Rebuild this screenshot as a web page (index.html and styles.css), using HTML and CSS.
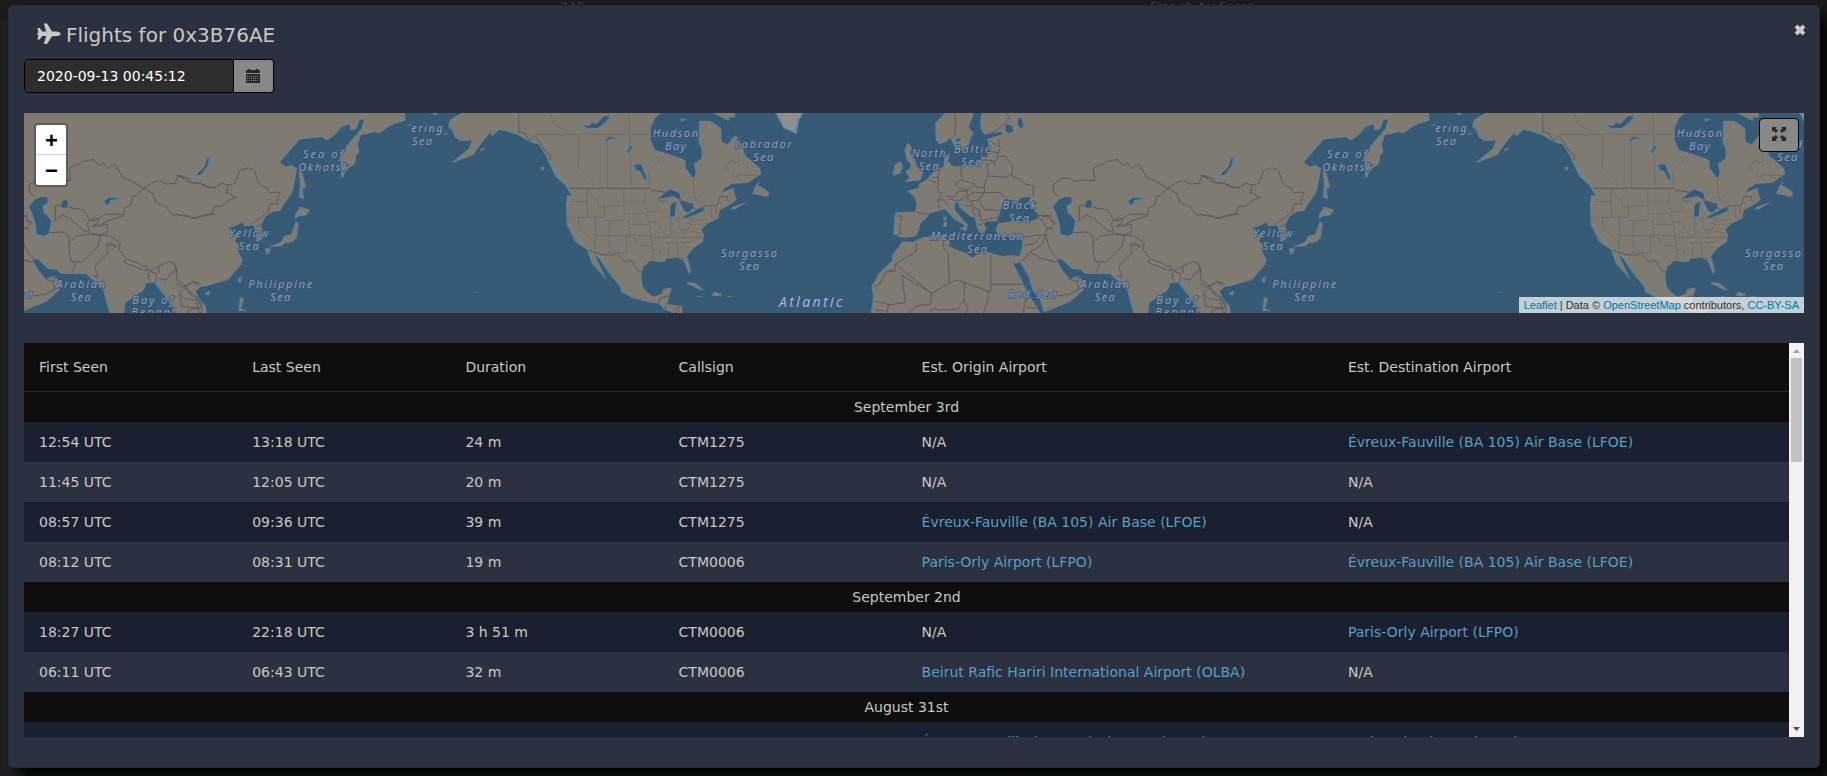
FILE: index.html
```html
<!DOCTYPE html>
<html lang="en">
<head>
<meta charset="utf-8">
<title>Flights for 0x3B76AE</title>
<link rel="stylesheet" href="styles.css">
</head>
<body>
<div class="backdrop"><span class="backdrop-count">240</span><span class="backdrop-operator">French Air Force</span></div>
<main class="dialog">
  <header class="dialog-header">
    <svg class="plane" viewBox="0 0 24 22"><path d="M0.4 5H2.6L5.4 8.6H9.2L6.8 0.6H10L15 8.4L19.6 8.5Q23.6 9.2 23.8 10.8Q23.6 12.4 19.6 13.1L15 13.2L10 21H6.8L9.2 13H5.4L2.6 16.6H0.4L1.3 12L0.2 11.4V10.2L1.3 9.6Z"/></svg>
    <h1 class="title">Flights for 0x3B76AE</h1>
    <svg class="close" viewBox="0 0 12 12"><path d="M2 2L10 10M10 2L2 10"/></svg>
  </header>
  <div class="date-group">
    <div class="date-input">2020-09-13 00:45:12</div>
    <div class="date-button">
      <svg class="calendar" viewBox="0 0 14 14"><path d="M0 1H2V0H4V1H10V0H12V1H14V4H0Z"/><path d="M0 5H14V14H0Z"/><path class="calendar-grid" d="M1 7.5H13M1 9.5H13M1 11.5H13" stroke-dasharray="1 1"/></svg>
    </div>
  </div>
  <section class="map">
    <svg class="tiles" viewBox="0 0 1780 200">
      <defs>
        <g id="eurasia">
          <g transform="translate(816 -13) scale(.33333)">
            <path d="M318 39L290 68L292 118L300 131L318 126L335 112L340 122L350 142L365 150L385 138L392 118L400 98L386 82L398 52L400 39Z"/>
            <path d="M430 39L424 60L428 92L440 103L486 94L492 102L446 116L450 135L452 158L430 165L428 178L400 196L370 196L350 200L335 196L324 182L330 160L318 170L315 200L290 208L276 225L262 240L242 250L240 262L206 272L228 290L234 310L230 335L172 336L168 350L164 402L186 410L198 412L228 408L238 390L240 372L262 352L268 340L300 332L318 326L330 338L345 355L376 374L380 388L384 372L372 362L345 330L344 310L358 306L364 322L395 348L410 352L412 372L422 396L432 400L440 385L432 372L440 366L470 364L476 350L482 330L488 310L498 295L520 300L530 310L545 292L578 290L568 306L585 330L602 345L595 356L570 366L530 362L478 370L470 388L480 405L520 410L550 420L552 435L542 468L515 466L486 468L440 455L416 460L402 474L374 458L340 445L328 440L330 425L312 405L250 412L222 426L190 424L180 440L162 462L160 482L120 520L98 560L104 590L97 639L602 639L565 580L540 530L515 480L530 490L545 486L570 530L582 570L605 600L615 636L690 605L730 572L732 545L715 528L690 538L668 510L650 480L668 476L700 505L725 508L740 520L815 522L866 570L885 639L925 639L928 608L985 570L990 550L1020 546L1030 562L1060 600L1085 639L1125 639L1130 600L1130 39Z"/>
            <path d="M206 128L198 150L205 180L216 190L214 205L200 212L212 232L198 245L242 240L250 215L232 200L220 168L210 160L216 145ZM182 184L168 195L162 226L182 220L188 200ZM316 344L320 354L318 362L314 358ZM316 364L322 366L320 380L314 380ZM362 384L382 380L380 392Z"/>
          </g>
          <g transform="translate(1176 -13) scale(.33333)">
            <path d="M92 639L90 620L65 590L60 572L75 560L100 556L155 540L195 495L200 480L187 455L190 435L178 425L185 405L165 400L160 385L205 365L208 378L236 375L245 400L245 425L262 415L265 400L255 380L268 350L290 335L312 332L350 275L356 245L364 205L345 195L330 200L312 187L372 118L440 110L455 120L476 106L498 80L525 72L528 90L540 88L552 58L568 58L560 85L515 138L500 165L498 190L500 235L512 210L538 190L540 168L550 155L545 132L555 105L602 95L612 100L640 78L690 60L685 39L0 39L0 555L45 639Z"/>
            <path d="M372 205L380 220L390 262L380 265L384 297L374 290L376 250ZM376 320L402 330L392 345L372 348L360 354L362 342ZM364 362L368 375L362 415L350 425L325 430L318 438L280 440L320 425L328 408L350 402ZM270 444L286 446L276 464ZM198 526L194 548L188 543ZM196 590L203 598L196 625L214 632L192 632ZM90 578L104 572L98 586Z"/>
          </g>
        </g>
        <g id="america" transform="translate(396 -13) scale(.33333)">
          <path d="M128 39L95 58L88 78L100 88L108 110L125 122L160 120L150 145L98 188L160 165L188 125L210 100L215 82L218 108L240 88L262 92L298 104L340 128L360 132L384 170L392 190L412 230L440 255L460 290L446 285L442 310L445 375L470 425L505 448L520 490L548 520L563 542L520 456L545 480L568 515L605 560L608 575L640 592L690 606L722 610L738 628L765 639L788 639L786 618L758 614L742 612L755 562L735 566L728 580L705 590L690 585L668 560L664 525L670 502L692 482L735 485L740 475L775 472L795 480L810 520L814 515L802 470L820 445L850 425L852 405L845 388L862 372L895 355L900 330L925 318L950 300L940 265L910 275L890 295L915 265L940 250L985 248L1023 222L1020 205L975 165L968 140L948 106L925 135L905 125L904 85L870 62L842 62L840 125L850 150L848 175L826 190L832 220L822 237L798 205L795 180L740 160L705 150L692 120L692 85L705 55L722 39Z"/>
          <path d="M185 148L195 142L190 152ZM365 200L374 200L370 212ZM1022 235L1015 255L1046 275L1046 290L1000 280ZM940 320L985 305L940 330ZM885 39L930 62L925 50L946 52L944 39ZM800 547L825 548L856 572L830 562ZM885 576L908 582L900 588L880 586ZM925 588L940 590L925 591ZM835 588L850 590L835 591ZM785 55L798 58L788 64ZM170 574L174 577L171 579ZM76 98L86 102L78 104ZM35 39L50 39L56 46Z"/>
        </g>
        <g id="world">
          <g class="shore"><use href="#eurasia" x="-1.5" y=".3"/><use href="#america" x="-1.5" y=".3"/></g>
          <g class="land"><use href="#eurasia"/><use href="#america"/></g>
          <g transform="translate(396 -13) scale(.33333)">
            <path class="shore" d="M1065 39L1090 85L1130 102L1138 60L1150 39Z"/>
            <path class="ice" d="M1072 39L1092 82L1124 96L1134 60L1146 39Z"/>
            <g class="shore"><path d="M490 76L510 78L516 68L530 72L555 48L574 50L560 66L536 86L504 88L490 82ZM552 124L566 112L596 114L570 120L554 128ZM630 138L638 136L636 150L622 166L620 154ZM642 194L666 192L684 240L678 246L664 216L644 208ZM714 298L735 280L750 268L782 280L786 300L760 290L745 294L720 298ZM755 312L772 304L768 350L752 356ZM778 302L822 310L824 325L806 340L790 332ZM788 352L824 334L858 322L852 336L800 358ZM534 352L550 362L540 364Z"/></g>
            <g class="water"><path d="M490 76L510 78L516 68L528 73L553 48L570 50L558 64L534 83L504 85ZM552 124L566 112L590 114L568 118ZM630 138L636 138L632 150L620 160ZM644 196L662 192L680 238L674 240L662 214L646 208ZM714 296L735 280L750 268L778 280L782 298L760 288L745 292ZM752 316L768 304L764 348L750 352ZM778 302L820 312L818 325L804 338L792 330ZM788 352L824 332L854 322L848 334L800 354Z"/></g>
            <path class="border" d="M296 39V97L312 98L330 122L342 106L360 128L380 160L392 168L390 182M450 265H688L694 270L742 278L800 308L830 330L860 317H890L902 290L920 288L926 308M505 450L550 465H580L590 460L615 486L632 480L655 514L668 517M716 612L720 595L735 590L748 588M742 610L735 628M755 632L780 620M765 639L782 628"/>
            <path class="state" d="M346 103H690M475 103V200L520 245L522 265M562 103V265M628 39V103L634 265M390 39L398 65L420 85L436 88L444 103M688 265V213L738 160M820 237L824 295L860 312M1020 226H956L945 232L925 218L922 190L932 180L940 190L958 185L956 165M508 265L512 285L530 300L535 320H553M448 305H490L502 300V265M502 300V352M442 352H553V317H612M475 352V385L526 430M526 352V450M526 406H692L690 385L682 350L676 300L672 265M568 362V458M553 362H628V406M612 265V340H672L684 352M612 303H676M628 373H690M620 406V458H568M645 412V432L696 440M620 412H645M682 334H722M684 367H722M695 412H850M692 406L698 450L720 448L718 470M698 448V475M735 428H810L842 412M748 428L745 472M770 428L776 472M776 472L804 474M790 428L820 458M722 300L708 320L722 340L730 360L720 380L738 410M752 355V395M776 355V385L738 408M776 355H800M776 385L800 392L812 374L862 372M812 360H858M812 374V350M800 392L785 408M812 395L842 398M875 317L874 355M892 317L885 355M738 304L712 300"/>
          </g>
          <g transform="translate(816 -13) scale(.33333)">
            <g class="shore"><path d="M640 320L655 300L675 292L698 292L698 312L686 318L684 338L700 350L712 364L706 382L704 402L684 411L660 404L658 375L648 342ZM738 305L752 298L760 306L758 326L736 322ZM866 302L880 292L920 294L918 300L886 303L882 314L870 316ZM1126 227L1142 226L1168 198L1174 172L1185 172L1182 196L1158 226L1130 234ZM496 72L520 78L526 92L510 104L498 96ZM535 54L548 54L556 84L540 86L534 74ZM346 120L360 112L366 118L350 128Z"/></g>
            <g class="water"><path d="M640 320L655 300L675 292L694 292L694 310L680 316L682 338L696 350L706 364L702 380L698 400L684 408L662 402L660 375L650 342ZM738 305L750 300L756 306L752 324L736 322ZM866 302L880 294L912 295L884 300L878 312L870 314ZM1128 227L1140 226L1166 200L1174 174L1180 176L1174 198L1154 224ZM496 72L516 78L520 92L510 100L498 94ZM535 54L546 56L550 80L540 84L534 72ZM346 120L360 114L364 118L350 126ZM478 352L500 358L496 366L474 366ZM436 365L474 364L466 398L452 396L438 380ZM428 148L444 142L442 170L428 172Z"/></g>
            <path class="border" d="M344 39L348 72L342 110M500 39L508 55L470 92L444 102M475 115L480 145L470 180L440 195L444 225L432 260L434 278M448 122L475 138M450 152L476 160M430 180L462 182L466 200M478 170L498 168L518 200L515 228L540 238L555 252L580 258V290M444 228L500 232L515 220M300 205L294 230L296 252L290 262L306 285L294 300M266 240L290 250M276 232L294 232M362 196L366 238L345 252L362 268L382 270L398 258L435 264M366 240L404 252M320 288L345 292L352 276L382 272L380 290L352 304L330 296M382 290L402 276L432 280L416 300L392 304L380 292M434 278L480 278L498 294M418 300L432 328L478 332M420 340L424 362L476 352M392 304L402 320L398 335L410 350M402 322L418 330V352M372 316L398 318M294 300H312L326 320M294 300L298 325M230 336L264 345M172 348H186L180 370L182 402L170 404M430 370L414 376M548 412L590 405H616L608 432L572 456L545 485M552 436L580 432L600 412M616 405L622 386L610 368L592 345L630 352L642 372L628 388L618 382M610 345L636 348M630 360L652 370M622 386L640 386M618 405L625 435L640 462L655 480M572 458L605 476L640 484L650 488M545 485L568 460M452 466V553H550M452 553V572L444 578V600L430 639M452 576L350 540L328 550L275 580L166 492L230 454L228 428M166 492L165 514L136 516L120 552L100 560M136 516L166 508M186 526L275 580L272 612L230 618L205 639M186 526L196 608L146 615L136 610L104 604M310 420L312 448L325 462L328 550M325 440L332 430M374 546L372 600L352 628L300 630L282 626L268 635M372 600L384 630L376 639M146 615L140 639M106 630L134 632M550 639L556 600L570 590M560 622L590 625M590 605L600 622M640 590L690 582L716 570L712 548L716 530M690 538L712 545M656 292L640 275V255L665 235L690 235L706 245L724 240L764 242L760 205L800 185L832 178L846 196L862 188L874 206L895 192L920 232L940 240L983 264L960 290L952 285L944 316L926 324L924 344L870 342L838 362L820 360L804 330L770 324L740 312L718 318V358M983 264L1010 248L1030 241L1050 252L1078 250L1086 226L1120 236L1126 248L1158 252L1180 262L1200 264M983 264L1010 280L1018 305L1050 320L1068 344L1110 346L1134 355L1165 344L1200 342M712 364L740 345L765 358L800 390L822 398L812 370L840 352L850 365L835 375L852 378L868 365L924 346M822 380L875 372L872 400L850 404L828 400M704 398L740 396L760 410L758 440L764 480L778 492L768 520M758 430L785 408L822 402L852 408L846 440L820 465L800 485L764 484M852 406L880 408L912 428L910 450L930 475L990 500L1000 512L1030 498L1060 484L1076 490L1085 520M872 434L884 428L902 440L872 434L875 460L836 500L846 532L832 528M930 475L925 488L990 512L994 500M995 510L1000 545M1002 515L1022 520L1020 545M1030 498L1028 520M1085 500L1050 540L1030 535M1076 492L1084 540L1110 560L1090 580L1104 595L1140 600L1150 639M1110 560L1130 545L1150 555M1108 560L1125 585L1150 600L1160 625M1090 585L1098 620L1150 624"/>
          </g>
          <g transform="translate(1176 -13) scale(.33333)">
            <path class="border" d="M0 225L28 238L40 248L70 248L90 262L120 262L138 250L158 255L150 278L182 292L160 300L138 318L115 320L108 342L55 355L0 342M158 255L178 250L190 212L215 204L235 210L250 255L275 264L280 278L310 276L302 312L280 314L278 335L250 355L222 374M240 380L260 370M0 550L20 562L50 545L75 550M28 565L60 590L76 620V639M36 639L38 628L72 625"/>
          </g>
          <g class="sea" transform="translate(396 -13) scale(.33333)">
            <text x="18" y="96" textLength="108">'ering</text><text x="8" y="135">Sea</text>
            <text x="768" y="112" textLength="140">Hudson</text><text x="768" y="151">Bay</text>
            <text x="1032" y="145" textLength="175">Labrador</text><text x="1032" y="183">Sea</text>
            <text x="989" y="471" textLength="172">Sargasso</text><text x="989" y="509">Sea</text>
            <text class="ocean" x="1175" y="621" textLength="196">Atlantic</text>
          </g>
          <g class="sea" transform="translate(816 -13) scale(.33333)">
            <text x="268" y="171" textLength="106">North</text><text x="268" y="209">Sea</text>
            <text x="398" y="160" textLength="112">Baltic</text><text x="396" y="199">Sea</text>
            <text x="540" y="327" textLength="104">Black</text><text x="539" y="366">Sea</text>
            <text x="413" y="420" textLength="282">Mediterranean</text><text x="413" y="459">Sea</text>
            <text x="579" y="593" textLength="148">Red Sea</text>
            <text x="796" y="565" textLength="150">Arabian</text><text x="796" y="604">Sea</text>
            <text x="1012" y="611" textLength="126">Bay of</text><text x="1012" y="649" textLength="132">Bengal</text>
          </g>
          <g class="sea" transform="translate(1176 -13) scale(.33333)">
            <text x="443" y="175" textLength="124">Sea of</text><text x="443" y="214" textLength="152">Okhotsk</text>
            <text x="220" y="410" textLength="122">Yellow</text><text x="220" y="449">Sea</text>
            <text x="315" y="565" textLength="196">Philippine</text><text x="315" y="604">Sea</text>
          </g>
        </g>
      </defs>
      <rect class="water" width="1780" height="200"/>
      <use href="#world" x="-1024"/><use href="#world"/><use href="#world" x="1024"/>
    </svg>
    <div class="zoom"><span class="zoom-button">+</span><span class="zoom-button">−</span></div>
    <div class="fullscreen"><svg viewBox="0 0 14 14"><path d="M0 0H5L3.6 1.4L6 3.8L3.8 6L1.4 3.6L0 5ZM14 0V5L12.6 3.6L10.2 6L8 3.8L10.4 1.4L9 0ZM0 14V9L1.4 10.4L3.8 8L6 10.2L3.6 12.6L5 14ZM14 14H9L10.4 12.6L8 10.2L10.2 8L12.6 10.4L14 9Z"/></svg></div>
    <div class="attribution"><a>Leaflet</a> | Data © <a>OpenStreetMap</a> contributors, <a>CC-BY-SA</a></div>
  </section>
  <section class="flights">
    <div class="table">
      <div class="row head"><span>First Seen</span><span>Last Seen</span><span>Duration</span><span>Callsign</span><span>Est. Origin Airport</span><span>Est. Destination Airport</span></div>
      <div class="day">September 3rd</div>
      <div class="row dark"><span>12:54 UTC</span><span>13:18 UTC</span><span>24 m</span><span>CTM1275</span><span>N/A</span><a>Évreux-Fauville (BA 105) Air Base (LFOE)</a></div>
      <div class="row"><span>11:45 UTC</span><span>12:05 UTC</span><span>20 m</span><span>CTM1275</span><span>N/A</span><span>N/A</span></div>
      <div class="row dark"><span>08:57 UTC</span><span>09:36 UTC</span><span>39 m</span><span>CTM1275</span><a>Évreux-Fauville (BA 105) Air Base (LFOE)</a><span>N/A</span></div>
      <div class="row"><span>08:12 UTC</span><span>08:31 UTC</span><span>19 m</span><span>CTM0006</span><a>Paris-Orly Airport (LFPO)</a><a>Évreux-Fauville (BA 105) Air Base (LFOE)</a></div>
      <div class="day">September 2nd</div>
      <div class="row dark"><span>18:27 UTC</span><span>22:18 UTC</span><span>3 h 51 m</span><span>CTM0006</span><span>N/A</span><a>Paris-Orly Airport (LFPO)</a></div>
      <div class="row"><span>06:11 UTC</span><span>06:43 UTC</span><span>32 m</span><span>CTM0006</span><a>Beirut Rafic Hariri International Airport (OLBA)</a><span>N/A</span></div>
      <div class="day">August 31st</div>
      <div class="row dark"><span></span><span></span><span></span><span></span><a>Évreux-Fauville (BA 105) Air Base (LFOE)</a><a>Paris-Orly Airport (LFPO)</a></div>
    </div>
    <div class="scrollbar">
      <svg class="arrow arrow-up" viewBox="0 0 15 15"><path d="M4 10L7.5 6L11 10Z"/></svg>
      <div class="thumb"></div>
      <svg class="arrow" viewBox="0 0 15 15"><path d="M4 5L7.5 9L11 5Z"/></svg>
    </div>
  </section>
</main>
</body>
</html>
```
FILE: styles.css
```css
* { box-sizing: border-box; }
body { margin: 0; height: 776px; overflow: hidden; background: #1e2022; color: #c8c8c8; font: 14px/20px "DejaVu Sans", sans-serif; }
.backdrop { position: absolute; top: 0; left: 0; width: 1827px; height: 20px; overflow: hidden; display: grid; grid-template-columns: 590px 1fr; padding-left: 560px; font-size: 13px; line-height: 14px; color: #3c3c3e; background: #1b1c1e; }
.dialog { position: relative; display: flex; flex-direction: column; width: 1812px; height: 763px; margin: 5px 0 0 8px; padding: 0 15px; background: #2c3141; border: 1px solid #2b2b2e; border-radius: 5px; box-shadow: 10px 10px 15px #000; }
.dialog-header { display: flex; align-items: center; height: 53px; flex: none; padding: 5px 0 0 13px; }
.plane { width: 24px; height: 22px; fill: #c8c8c8; margin-top: -3px; }
.title { margin: 0 0 0 5px; font-size: 20px; font-weight: 400; line-height: 24px; }
.close { width: 12px; height: 12px; margin: -10px -2px 0 auto; stroke: #c8c8c8; stroke-width: 4; }
.date-group { display: flex; flex: none; width: 250px; height: 34px; border: 1px solid #000; border-radius: 4px; overflow: hidden; }
.date-input { width: 209px; padding: 6px 12px; color: #fff; background: #2d2d2d; border-right: 1px solid #000; }
.date-button { flex: 1; display: flex; align-items: center; justify-content: center; background: #888; }
.calendar { width: 14px; height: 14px; fill: #272727; margin-left: -1px; }
.calendar-grid { stroke: #888; stroke-width: 1; }
.map { position: relative; flex: none; height: 200px; margin-top: 20px; overflow: hidden; }
.tiles { display: block; width: 1780px; height: 200px; }
.water { fill: #375b76; }
.shore { fill: #5087ac; }
.land { fill: #7f7a72; }
.ice { fill: #8f8d8d; }
.border { fill: none; stroke: #5c5660; stroke-width: 2.8; stroke-linejoin: round; }
.state { fill: none; stroke: #6d6961; stroke-width: 2.1; }
.sea { fill: #8c9fc0; stroke: #37506f; stroke-width: 4; paint-order: stroke; font: italic 33px "Noto Sans", sans-serif; letter-spacing: 4px; text-anchor: middle; }
.ocean { font-size: 42px; fill: #9dbbe0; letter-spacing: 6px; }
.zoom { position: absolute; left: 10px; top: 10px; width: 34px; border: 2px solid rgba(0,0,0,.25); border-radius: 4px; background-clip: padding-box; }
.zoom-button { display: block; height: 30px; background: #fff; color: #000; text-align: center; text-indent: 1px; font: bold 22px/31px "Liberation Sans", sans-serif; }
.zoom-button:first-child { border-bottom: 1px solid #ccc; border-radius: 2px 2px 0 0; }
.zoom-button:last-child { border-radius: 0 0 2px 2px; }
.fullscreen { position: absolute; right: 5px; top: 5px; width: 40px; height: 34px; display: flex; align-items: center; justify-content: center; border: 1px solid #000; border-radius: 4px; background: #888; }
.fullscreen svg { width: 14px; height: 14px; fill: #272727; margin-top: -2px; }
.attribution { position: absolute; right: 0; bottom: 0; height: 16px; padding: 0 5px; background: rgba(255,255,255,.7); color: #333; font: 11px/16px "Liberation Sans", sans-serif; }
.attribution a { color: #0078a8; }
.flights { display: flex; flex: none; height: 394px; margin-top: 30px; overflow: hidden; }
.table { flex: 1; }
.row { display: grid; grid-template-columns: 213.2px 213.2px 213.2px 243px 426.4px 1fr; height: 40px; padding-left: 15px; line-height: 40px; white-space: nowrap; }
.row a { color: #5a9fc4; }
.head { height: 49px; line-height: 48px; background: #0e0e0e; border-bottom: 1px solid #292929; }
.dark { background: #1b2030; }
.day { height: 30px; line-height: 30px; text-align: center; background: #0e0e0e; }
.scrollbar { display: flex; flex-direction: column; width: 15px; background: #f1f1f1; }
.thumb { width: 11px; height: 104px; margin: 0 2px auto; background: #c1c1c1; }
.arrow { width: 15px; height: 15px; fill: #505050; }
.arrow-up { fill: #a3a3a3; }
```
